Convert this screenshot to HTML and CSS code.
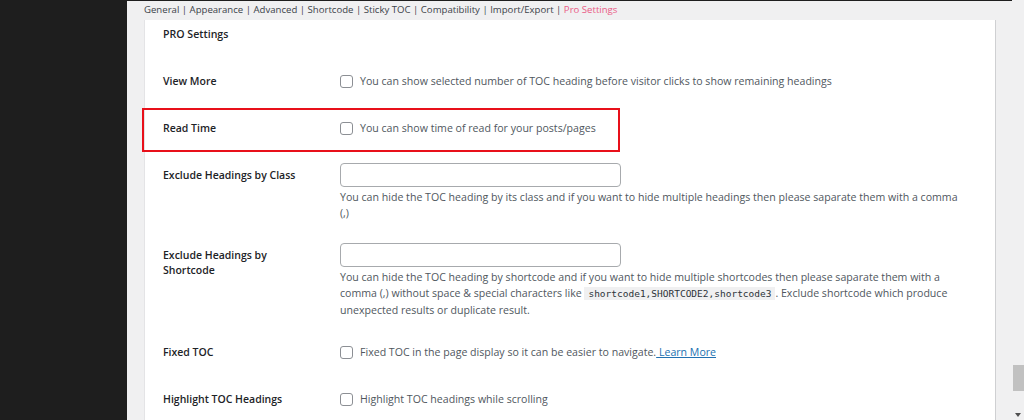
FILE: index.html
```html
<!DOCTYPE html>
<html lang="en">
<head>
  <meta charset="UTF-8">
  <title>Table of Contents – Pro Settings</title>
  <link rel="stylesheet" href="styles.css">
</head>
<body>
  <div class="sidebar"></div>

  <div class="main">
    <nav class="tabs">
      <a href="#">General</a> | <a href="#">Appearance</a> | <a href="#">Advanced</a> | <a href="#">Shortcode</a> | <a href="#">Sticky TOC</a> | <a href="#">Compatibility</a> | <a href="#">Import/Export</a> | <a href="#" class="current">Pro Settings</a>
    </nav>

    <div class="panel">
      <h2 class="panel-title">PRO Settings</h2>

      <div class="row">
        <div class="label">View More</div>
        <div class="field check">
          <label><span class="box"></span>You can show selected number of TOC heading before visitor clicks to show remaining headings</label>
        </div>
      </div>

      <div class="row marked">
        <div class="label">Read Time</div>
        <div class="field check">
          <label><span class="box"></span>You can show time of read for your posts/pages</label>
        </div>
      </div>

      <div class="row">
        <div class="label">Exclude Headings by Class</div>
        <div class="field">
          <input type="text" class="text-input">
          <p class="desc">You can hide the TOC heading by its class and if you want to hide multiple headings then please saparate them with a comma (,)</p>
        </div>
      </div>

      <div class="row">
        <div class="label">Exclude Headings by<br>Shortcode</div>
        <div class="field">
          <input type="text" class="text-input">
          <p class="desc">You can hide the TOC heading by shortcode and if you want to hide multiple shortcodes then please saparate them with a comma (,) without space &amp; special characters like <code>shortcode1,SHORTCODE2,shortcode3</code>. Exclude shortcode which produce unexpected results or duplicate result.</p>
        </div>
      </div>

      <div class="row">
        <div class="label">Fixed TOC</div>
        <div class="field check">
          <label><span class="box"></span>Fixed TOC in the page display so it can be easier to navigate.<a href="#" class="more"> Learn More</a></label>
        </div>
      </div>

      <div class="row">
        <div class="label">Highlight TOC Headings</div>
        <div class="field check">
          <label><span class="box"></span>Highlight TOC headings while scrolling</label>
        </div>
      </div>
    </div>
  </div>

  <div class="scrollbar">
    <div class="thumb"></div>
    <div class="arrow"></div>
  </div>
</body>
</html>
```

FILE: styles.css
```css
html, body {
  height: 100%;
}
body {
  margin: 0;
  height: 420px;
  overflow: hidden;
  display: grid;
  grid-template-columns: 127px 1fr 12px;
  background: #f0f0f1;
  font-family: 'Open Sans', 'Noto Sans', sans-serif;
  font-size: 10.6px;
  color: #3c434a;
}
.sidebar {
  background: #1e1e1e;
}
.main {
  border-top: 1px solid #1e1e1e;
  padding: 0 16px 0 17px;
  min-width: 0;
}
.tabs {
  font-size: 9.6px;
  line-height: 17px;
  color: #3c434a;
  margin-bottom: 2px;
  white-space: nowrap;
}
.tabs a {
  color: #3c434a;
  text-decoration: none;
}
.tabs a.current {
  color: #ea5b86;
}
.panel {
  background: white;
  border-left: 1px solid #e4e4e6;
  border-right: 1px solid #cfd0d2;
  padding: 0 31px 0 18px;
  height: 400px;
}
.panel-title {
  margin: 0 0 16px;
  padding-top: 7px;
  font-size: 10.6px;
  line-height: 15px;
  font-weight: 600;
  color: #1d2327;
}
.row {
  display: grid;
  grid-template-columns: 177px 1fr;
  position: relative;
}
.row.marked::after {
  content: "";
  position: absolute;
  left: -21px;
  top: 3px;
  width: 474px;
  height: 40px;
  border: 2px solid #e8101a;
  pointer-events: none;
}
.label {
  padding: 16px 0;
  font-size: 10.5px;
  line-height: 15px;
  font-weight: 600;
  color: #1d2327;
}
.field {
  padding: 11px 0;
  line-height: 16px;
  color: #50575e;
}
.field.check {
  padding-top: 16px;
  line-height: 15px;
}
.field label {
  display: flex;
  align-items: center;
}
.box {
  width: 11px;
  height: 11px;
  border: 1px solid #8c8f94;
  border-radius: 3px;
  background: white;
  margin-right: 7px;
  flex: none;
}
.more {
  color: #2271b1;
  text-decoration: underline;
  white-space: pre;
}
.text-input {
  display: block;
  box-sizing: border-box;
  width: 281px;
  height: 24px;
  margin: 0;
  border: 1px solid #a7aaad;
  border-radius: 4px;
  background: white;
}
.desc {
  margin: 2px 0 0;
  line-height: 16px;
}
code {
  font-family: 'DejaVu Sans Mono', 'Liberation Mono', monospace;
  font-size: 9.5px;
  background: #f0f0f1;
  padding: 1px 4px;
  color: #2c3338;
}
.scrollbar {
  position: relative;
  background: #f0f0f1;
}
.thumb {
  position: absolute;
  top: 365px;
  right: 0;
  width: 11px;
  height: 26px;
  background: #c1c1c1;
}
.arrow {
  position: absolute;
  bottom: 3px;
  left: 3px;
  border-left: 3px solid transparent;
  border-right: 3px solid transparent;
  border-top: 4px solid #505050;
}
```
